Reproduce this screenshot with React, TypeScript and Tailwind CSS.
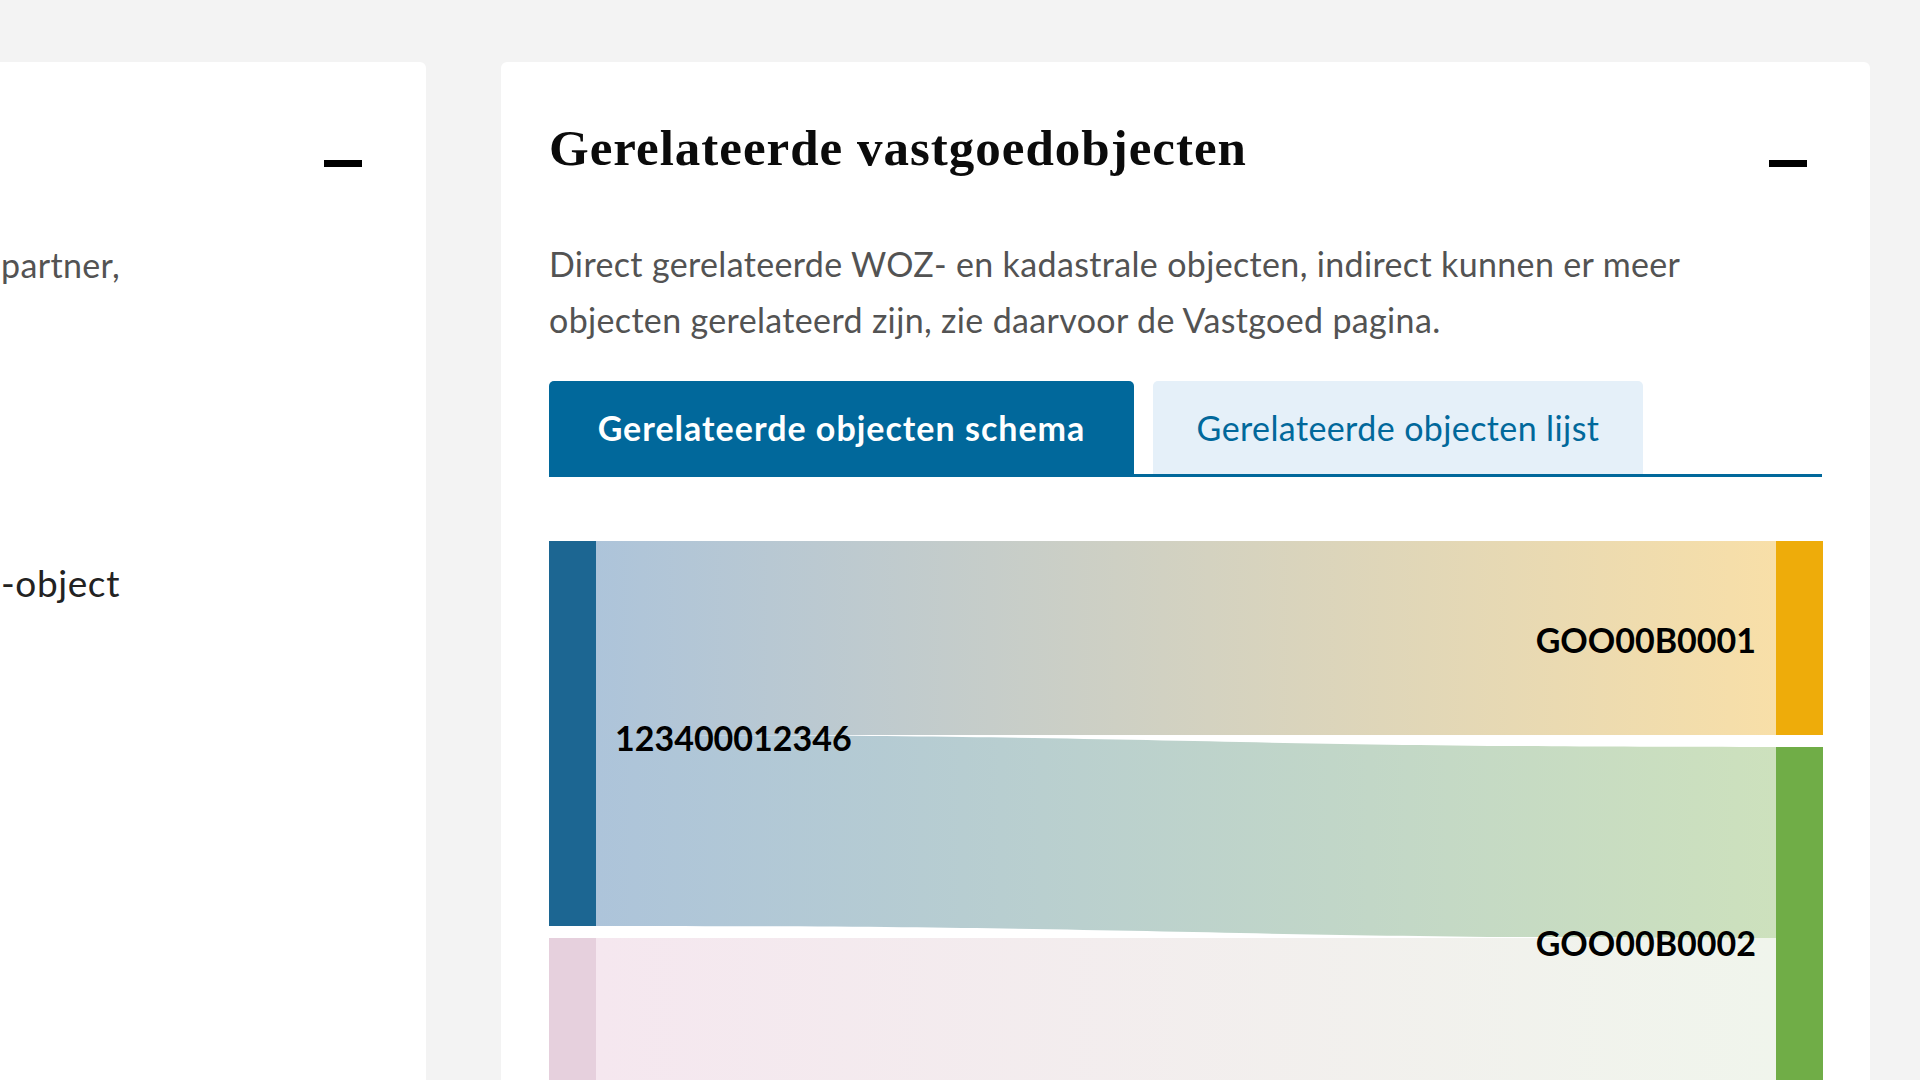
import React from "react";

const sans = "font-['Lato','Liberation_Sans',sans-serif]";

function Minus() {
  return <div className="h-[7px] w-[38px] bg-black" />;
}

function Sankey() {
  const W = 1274;
  const nx = 47;
  const rx = W - 47;
  const mid = (nx + rx) / 2;
  const link = (y0: number, y1: number, y2: number, y3: number) =>
    `M ${nx} ${y0} C ${mid} ${y0}, ${mid} ${y2}, ${rx} ${y2} L ${rx} ${y3} C ${mid} ${y3}, ${mid} ${y1}, ${nx} ${y1} Z`;
  return (
    <svg width={W} height={620} viewBox={`0 0 ${W} 620`} className="block">
      <defs>
        <linearGradient id="g1" x1="0" x2="1" y1="0" y2="0">
          <stop offset="0" stopColor="#adc4da" />
          <stop offset="1" stopColor="#f8dfa8" />
        </linearGradient>
        <linearGradient id="g2" x1="0" x2="1" y1="0" y2="0">
          <stop offset="0" stopColor="#adc4da" />
          <stop offset="1" stopColor="#cde1bd" />
        </linearGradient>
        <linearGradient id="g3" x1="0" x2="1" y1="0" y2="0">
          <stop offset="0" stopColor="#f5e7ef" />
          <stop offset="1" stopColor="#f0f5ec" />
        </linearGradient>
      </defs>
      <path d={link(0, 194, 0, 194)} fill="url(#g1)" />
      <path d={link(194, 385, 206, 397)} fill="url(#g2)" />
      <path d={link(397, 620, 397, 620)} fill="url(#g3)" />
      <rect x={0} y={0} width={47} height={385} fill="#1c6692" />
      <rect x={0} y={397} width={47} height={230} fill="#e6d0dd" />
      <rect x={rx} y={0} width={47} height={194} fill="#eeac0a" />
      <rect x={rx} y={206} width={47} height={420} fill="#70ad47" />
      <g fontFamily="Lato, 'Liberation Sans', sans-serif" fontWeight={700} fontSize={34} fill="#000">
        <text x={66} y={196} dominantBaseline="central">123400012346</text>
        <text x={rx - 20} y={98} dominantBaseline="central" textAnchor="end">GOO00B0001</text>
        <text x={rx - 20} y={401} dominantBaseline="central" textAnchor="end">GOO00B0002</text>
      </g>
    </svg>
  );
}

export default function App() {
  return (
    <div className="flex h-[1080px] w-[1920px] gap-[75px] overflow-hidden bg-[#f3f3f3] pt-[62px]">
      {/* Left card (partially off-screen) */}
      <div className="h-[1100px] w-[426px] shrink-0 rounded-r-[6px] bg-white">
        <div className="flex justify-end pr-[64px] pt-[98px]">
          <Minus />
        </div>
        <div className={`mt-[70px] flex w-[120px] justify-end ${sans}`}>
          <span className="whitespace-nowrap text-[34px] leading-[56px] tracking-[0.35px] text-[#535353]">
            Eigenaar, echtgenoot of fiscaal partner,
          </span>
        </div>
        <div className={`mt-[262px] flex w-[120px] justify-end ${sans}`}>
          <span className="whitespace-nowrap text-[37px] leading-[56px] tracking-[0.6px] text-[#222]">
            Gerelateerd WOZ-object
          </span>
        </div>
      </div>

      {/* Right card */}
      <div className="h-[1100px] w-[1369px] shrink-0 rounded-[6px] bg-white px-12 pt-[58px]">
        <div className="flex items-start justify-between">
          <h2 className="font-['Liberation_Serif',serif] text-[51px] font-bold leading-[57.6px] tracking-[1px] text-[#0b0b0b]">
            Gerelateerde vastgoedobjecten
          </h2>
          <div className="mr-[15px] mt-[40px]">
            <Minus />
          </div>
        </div>
        <p className={`mt-[58px] max-w-[1190px] text-[34px] leading-[56px] tracking-[0.35px] text-[#535353] ${sans}`}>
          Direct gerelateerde WOZ- en kadastrale objecten, indirect kunnen er meer objecten gerelateerd zijn, zie daarvoor de Vastgoed pagina.
        </p>
        <div className={`mt-[33px] flex gap-[19px] border-b-[3px] border-[#01689b] ${sans}`}>
          <button className="flex h-[93px] w-[585px] items-center justify-center rounded-t-[5px] bg-[#01689b] text-[34px] font-bold tracking-[1px] text-white">
            Gerelateerde objecten schema
          </button>
          <button className="flex h-[93px] w-[490px] items-center justify-center rounded-t-[5px] bg-[#e5f0f9] text-[34px] tracking-[0.4px] text-[#01689b]">
            Gerelateerde objecten lijst
          </button>
        </div>
        <div className="mt-[64px]">
          <Sankey />
        </div>
      </div>
    </div>
  );
}
